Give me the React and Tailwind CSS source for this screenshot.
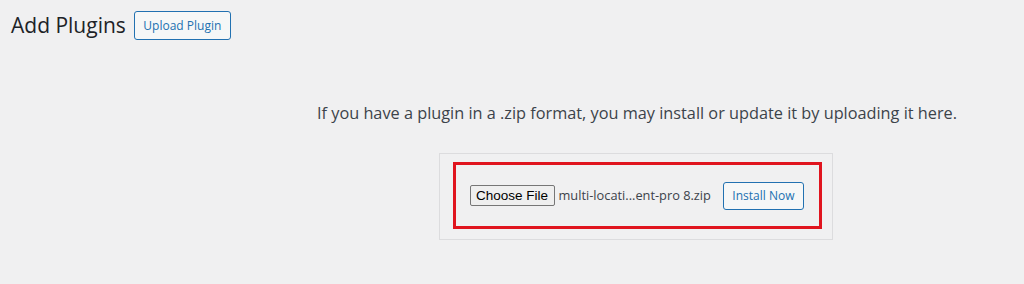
export default function App() {
  return (
    <div className="w-[1024px] h-[284px] bg-[#f0f0f1] overflow-hidden" style={{ fontFamily: '"Open Sans", "Noto Sans", sans-serif' }}>
      <div className="flex items-center pl-[11px] pt-[11px]">
        <h1 className="text-[21px] leading-[29px] text-[#1d2327] font-normal">Add Plugins</h1>
        <button className="ml-[8px] h-[29px] w-[97px] border border-[#2271b1] rounded-[3px] bg-[#f6f7f7] text-[#2271b1] text-[12px] leading-none">
          Upload Plugin
        </button>
      </div>
      <div className="pl-[248px] flex flex-col items-center">
        <p className="mt-[62px] text-[16.3px] leading-[22px] text-[#3c434a] ml-[2px]">
          If you have a plugin in a .zip format, you may install or update it by uploading it here.
        </p>
        <div className="mt-[29px] w-[394px] h-[87px] border border-[#dcdcde] bg-[#f0f0f1] flex items-start pl-[13px] pt-[8px] ml-[-1px]">
          <div className="w-[369px] h-[67px] border-[3px] border-[#e0141e] flex items-center pl-[14px]">
            <div className="flex items-center">
              <span className="h-[21px] w-[85px] border border-[#767676] rounded-[2px] bg-[#efefef] text-black text-[13.5px] leading-[19px] flex items-center justify-center" style={{ fontFamily: '"Liberation Sans", Arial, sans-serif' }}>
                Choose File
              </span>
              <span className="ml-[4px] text-[12.8px] text-[#3c434a]">multi-locati...ent-pro 8.zip</span>
            </div>
            <button className="ml-[12px] h-[28px] w-[81px] border border-[#2271b1] rounded-[3px] bg-[#f6f7f7] text-[#2271b1] text-[12px] leading-none">
              Install Now
            </button>
          </div>
        </div>
      </div>
    </div>
  );
}
